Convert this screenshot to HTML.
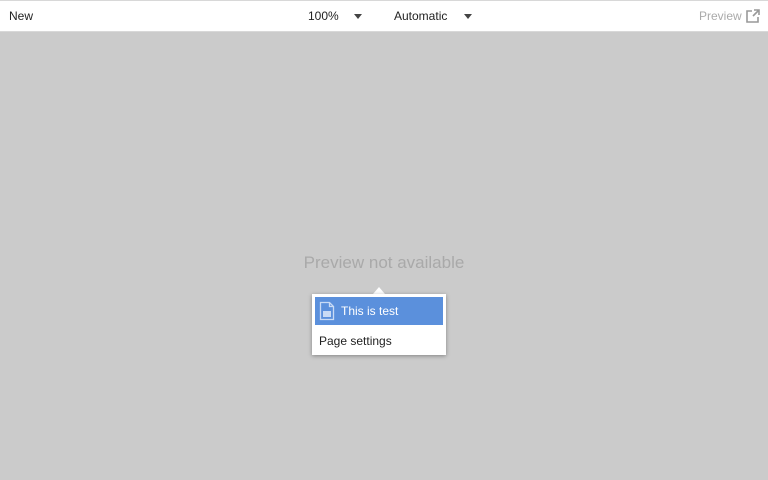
<!DOCTYPE html>
<html><head><meta charset="utf-8"><style>
*{margin:0;padding:0;box-sizing:border-box}
body{width:768px;height:480px;background:#cbcbcb;font-family:"Liberation Sans",sans-serif;position:relative;overflow:hidden}
.bar{position:absolute;left:0;top:0;width:768px;height:32px;background:#fff;border-top:1px solid #d8d8d8;border-bottom:1px solid #d8d8d8}
.t{position:absolute;top:8px;font-size:12px;color:#222}
.tri{position:absolute;top:13px;width:0;height:0;border-left:4.5px solid transparent;border-right:4.5px solid transparent;border-top:5px solid #444}
.msg{position:absolute;left:0;width:768px;top:253px;text-align:center;font-size:17px;color:#a9a9a9}
.pop{position:absolute;left:312px;top:294px;width:134px;height:61px;background:#fff;box-shadow:0 1px 4px rgba(0,0,0,.35)}
.arr{position:absolute;left:373px;top:287px;width:0;height:0;border-left:6px solid transparent;border-right:6px solid transparent;border-bottom:7px solid #fff}
.hi{position:absolute;left:3px;top:3px;width:128px;height:28px;background:#5b90dc}
</style></head><body>
<div class="bar">
<div class="t" style="left:9px">New</div>
<div class="t" style="left:308px">100%</div>
<div class="tri" style="left:354px"></div>
<div class="t" style="left:394px">Automatic</div>
<div class="tri" style="left:464px"></div>
<div class="t" style="left:699px;color:#aaa">Preview</div>
<svg style="position:absolute;left:745px;top:8px" width="15" height="15" viewBox="0 0 15 15" fill="none" stroke="#999" stroke-width="1.6"><path d="M7 2H2v11h11V8"/><path d="M8 7l6-6M9 1h5v5"/></svg>
</div>
<div class="msg">Preview not available</div>
<div class="arr"></div>
<div class="pop">
<div class="hi">
<svg style="position:absolute;left:4px;top:4px" width="16" height="20" viewBox="0 0 16 20" fill="none" stroke="#c9dbf5" stroke-width="1.3"><path d="M1.5 1.5h9l4 4v13h-13z"/><path d="M10.5 1.5v4h4"/><rect x="4" y="10" width="8" height="6" fill="#c9dbf5" stroke="none"/></svg>
<div style="position:absolute;left:26px;top:7px;font-size:12px;color:#fff">This is test</div>
</div>
<div style="position:absolute;left:7px;top:40px;font-size:12px;color:#222">Page settings</div>
</div>
</body></html>
